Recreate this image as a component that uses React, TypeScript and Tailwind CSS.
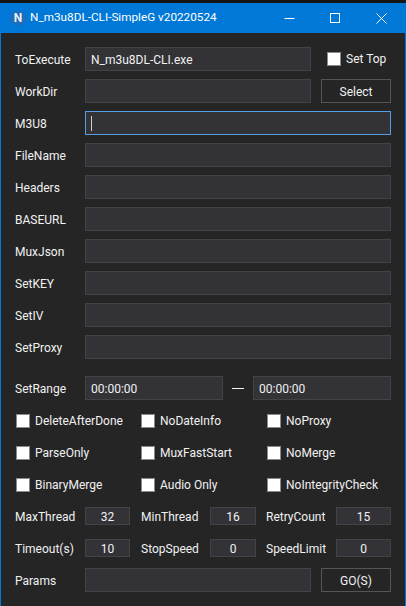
const Font = { fontFamily: 'Roboto, sans-serif' };

function Field({ value = "", w = "flex-1", focus = false, center = false, h = "h-6", caret = false }: { value?: string; w?: string; focus?: boolean; center?: boolean; h?: string; caret?: boolean }) {
  return (
    <div className={`${w} ${h} flex items-center border bg-[#333337] pt-px text-[12px] text-[#f1f1f1] ${focus ? "border-[#569de5]" : "border-[#434346]"} ${center ? "justify-center" : "pl-[5px]"}`}>
      {caret && <span className="h-[15px] w-px bg-[#d0d0d0]" />}
      {value}
    </div>
  );
}

function Row({ label, children }: { label: string; children?: React.ReactNode }) {
  return (
    <div className="flex h-6 items-center">
      <span className="w-[70px] pt-px text-[12px] text-[#f1f1f1]">{label}</span>
      {children}
    </div>
  );
}

function Button({ label }: { label: string }) {
  return <div className="ml-[10px] flex h-6 w-[70px] items-center justify-center border border-[#555555] pt-px text-[12px] text-[#f1f1f1]">{label}</div>;
}

function Check({ label, w }: { label: string; w: string }) {
  return (
    <div className={`flex ${w} items-center`}>
      <span className="h-[14px] w-[14px] border border-[#8a8a8a] bg-white" />
      <span className="ml-[5px] text-[12px] text-[#f1f1f1]">{label}</span>
    </div>
  );
}

function Nums({ items }: { items: [string, string][] }) {
  const labelW = ["w-[70px]", "w-[69px]", "w-[70px]"];
  const fieldW = ["w-[45px]", "w-[46px]", "w-[55px]"];
  const gaps = ["", "ml-[11px]", "ml-[10px]"];
  return (
    <div className="flex h-[18px] items-center">
      {items.map(([l, v], i) => (
        <div key={l} className={`flex items-center ${gaps[i]}`}>
          <span className={`${labelW[i]} pt-px text-[12px] text-[#f1f1f1]`}>{l}</span>
          <Field value={v} w={fieldW[i]} h="h-[18px]" center />
        </div>
      ))}
    </div>
  );
}

export default function App() {
  const plain = ["FileName", "Headers", "BASEURL", "MuxJson", "SetKEY", "SetIV", "SetProxy"];
  return (
    <div className="flex h-[606px] w-[406px] flex-col overflow-hidden bg-[#252526]" style={Font}>
      <div className="h-[3px] bg-[#151515]" />
      <div className="flex flex-1 flex-col border-x border-[#0078d7]">
        <div className="flex h-[30px] items-center bg-[#0078d7] text-white">
          <div className="ml-[9px] flex h-[14px] w-[16px] items-center justify-center rounded-full bg-[#1f6cb8] text-[12px] font-bold leading-none text-[#e8f0f8]">N</div>
          <span className="ml-[4px] text-[11.75px]">N_m3u8DL-CLI-SimpleG v20220524</span>
          <div className="ml-auto flex h-full">
            <div className="flex w-[46px] items-center justify-center">
              <svg width="11" height="11" viewBox="0 0 11 11"><path d="M0.5 5.5H10.5" stroke="#fff" /></svg>
            </div>
            <div className="flex w-[46px] items-center justify-center">
              <svg width="10" height="10" viewBox="0 0 10 10"><rect x="0.5" y="0.5" width="9" height="9" fill="none" stroke="#fff" /></svg>
            </div>
            <div className="mr-[1px] flex w-[46px] items-center justify-center">
              <svg width="11" height="11" viewBox="0 0 11 11"><path d="M0.5 0.5L10.5 10.5M10.5 0.5L0.5 10.5" stroke="#fff" /></svg>
            </div>
          </div>
        </div>
        <div className="flex flex-1 flex-col pl-[14px] pr-[14px] pt-[14px]">
          <div className="flex flex-col gap-2">
            <Row label="ToExecute">
              <Field value="N_m3u8DL-CLI.exe" />
              <div className="ml-[16px] flex w-[64px] items-center">
                <span className="h-[14px] w-[14px] border border-[#8a8a8a] bg-white" />
                <span className="ml-[5px] whitespace-nowrap text-[12px] text-[#f1f1f1]">Set Top</span>
              </div>
            </Row>
            <Row label="WorkDir">
              <Field />
              <Button label="Select" />
            </Row>
            <Row label="M3U8">
              <Field focus caret />
            </Row>
            {plain.map((l) => (
              <Row key={l} label={l}>
                <Field />
              </Row>
            ))}
          </div>
          <div className="mt-[17px] flex h-6 items-center">
            <span className="w-[70px] pt-px text-[12px] text-[#f1f1f1]">SetRange</span>
            <Field value="00:00:00" w="w-[138px]" />
            <div className="flex w-[30px] justify-center pt-px">
              <span className="h-px w-3 bg-[#f1f1f1]" />
            </div>
            <Field value="00:00:00" w="w-[138px]" />
          </div>
          <div className="mt-[14px] flex flex-col gap-[18px]">
            {[
              ["DeleteAfterDone", "NoDateInfo", "NoProxy"],
              ["ParseOnly", "MuxFastStart", "NoMerge"],
              ["BinaryMerge", "Audio Only", "NoIntegrityCheck"],
            ].map((row) => (
              <div key={row[0]} className="flex h-[14px] pl-px">
                <Check label={row[0]} w="w-[125px]" />
                <Check label={row[1]} w="w-[126px]" />
                <Check label={row[2]} w="w-[120px]" />
              </div>
            ))}
          </div>
          <div className="mt-[15px] flex flex-col gap-[14px]">
            <Nums items={[["MaxThread", "32"], ["MinThread", "16"], ["RetryCount", "15"]]} />
            <Nums items={[["Timeout(s)", "10"], ["StopSpeed", "0"], ["SpeedLimit", "0"]]} />
          </div>
          <div className="mt-[11px]">
            <Row label="Params">
              <Field />
              <Button label="GO(S)" />
            </Row>
          </div>
        </div>
      </div>
    </div>
  );
}
